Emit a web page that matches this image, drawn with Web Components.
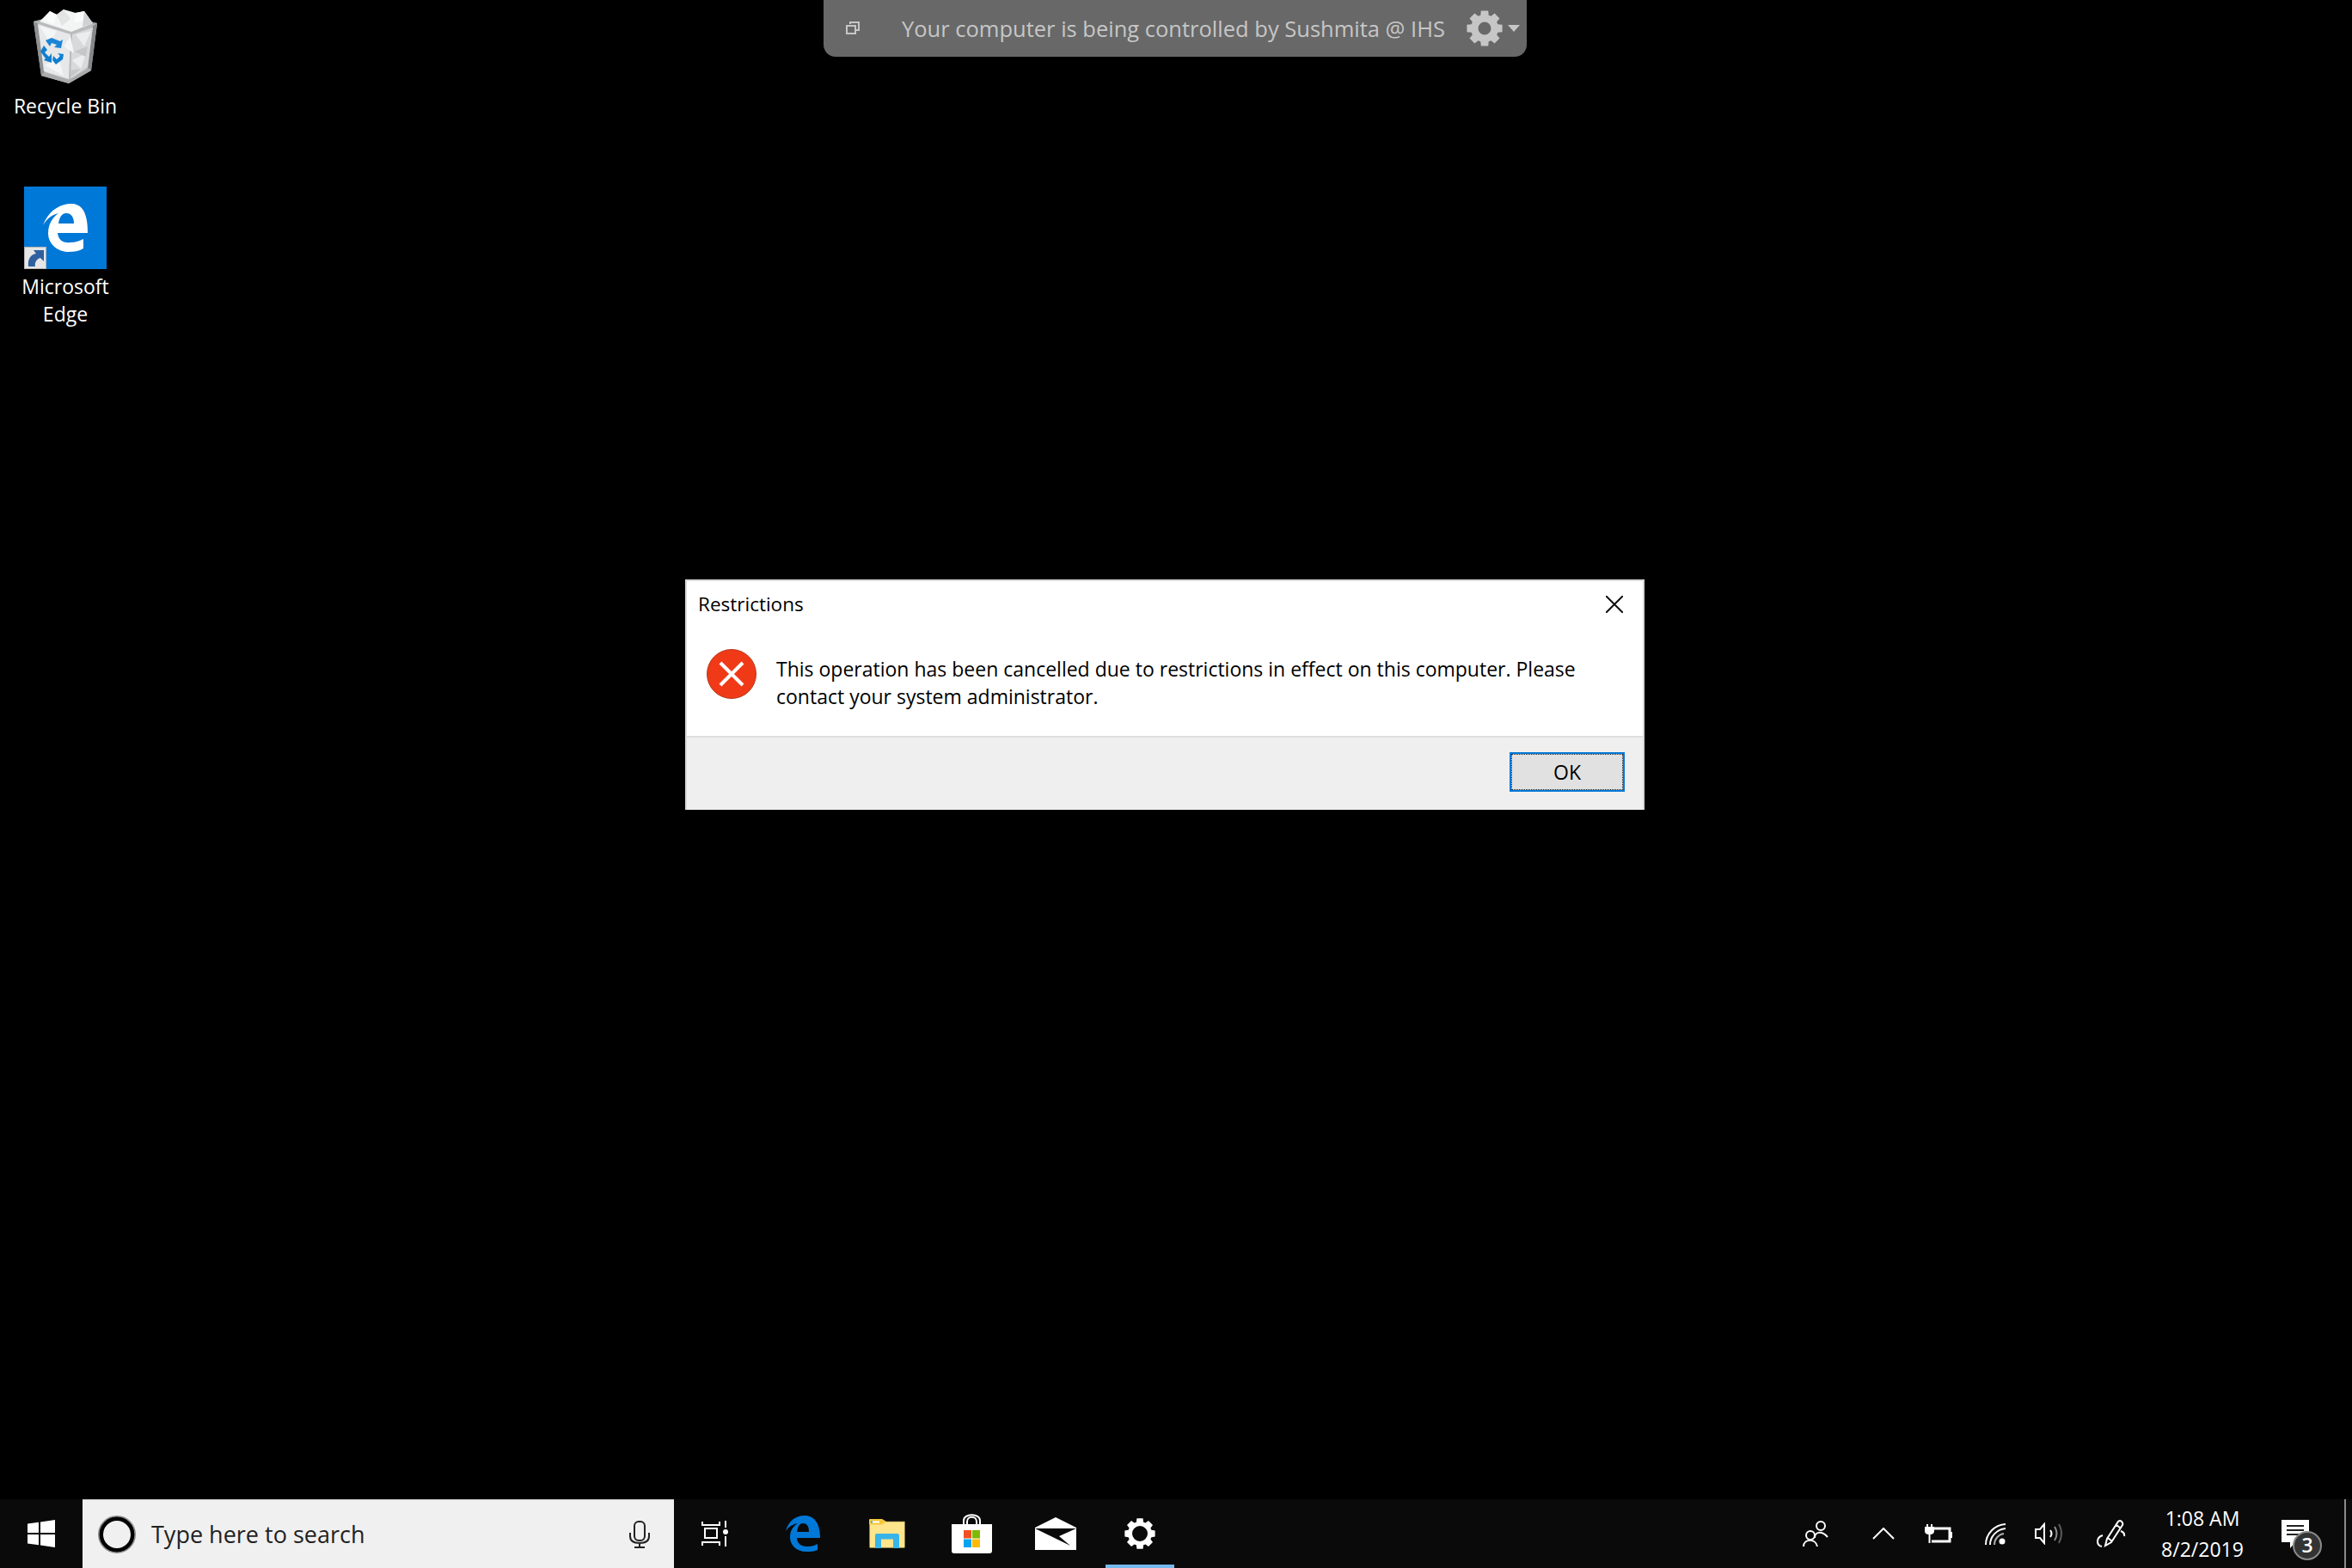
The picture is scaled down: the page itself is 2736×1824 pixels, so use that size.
<!DOCTYPE html>
<html>
<head>
<meta charset="utf-8">
<title>Restrictions</title>
<style>
  html, body { margin: 0; padding: 0; background: #000; }
  html { height: 1824px; overflow: hidden; }
  body { width: 2736px; height: 1824px; overflow: hidden; font-family: "Open Sans", "Noto Sans", sans-serif; }
</style>
</head>
<body>

<win-screen>
  <desktop-icon slot="icons" style="--top:6px" label="Recycle Bin">
    <svg width="76" height="88" viewBox="0 0 76 88">
      <path d="M1 15L32 7L75 17L68 72L42 87L10 78Z" fill="#b9bbbc"/>
      <path d="M1 15L32 7L75 17L71 18L32 10L6 15Z" fill="#989a9b"/>
      <path d="M1 15L6 17L14 75L10 78Z" fill="#8f9192"/>
      <path d="M75 17L70 20L64 70L68 72Z" fill="#858788"/>
      <path d="M6 18L44 30L42 82L13 73Z" fill="#e6e8e9"/>
      <path d="M46 30L70 22L64 68L44 82Z" fill="#d7d9da"/>
      <path d="M8 15L20 3L28 7L36 1L50 5L60 3L70 17L45 27Z" fill="#f3f4f4"/>
      <path d="M20 3L28 7L24 18L12 12Z M50 5L60 3L62 14L48 16Z" fill="#fbfbfb"/>
      <path d="M36 1L44 12L34 20L28 7Z" fill="#e2e4e5"/>
      <path d="M60 3L70 17L58 21Z" fill="#cfd1d2"/>
      <path d="M8 20L28 26L20 40Z M44 32L48 52L36 44Z M14 66L30 56L36 78Z" fill="#f4f5f5"/>
      <path d="M50 30L68 26L60 44Z M46 60L62 52L56 70Z" fill="#eceeee"/>
      <path d="M48 50L64 44L62 56Z M44 72L56 70L44 80Z" fill="#c5c7c8"/>
      <path d="M10 78L42 87L68 72L66 69L42 83L13 74Z" fill="#a9abac"/>
      <path d="M15 37L22 34L32 38L35 36L33 46L25 45L28 42L22 40L20 44Z" fill="#1a84d6"/>
      <path d="M13 43L17 48L14 51L19 56L22 52L22 63L13 60L15 58L9 50Z" fill="#0f7ed0"/>
      <path d="M24 55L28 59L32 55L29 52L36 53L35 59L27 65L23 60Z" fill="#0f7ed0"/>
    </svg>
  </desktop-icon>
  <desktop-icon slot="icons" style="--top:78px;--gap:4px" label="Microsoft Edge">
    <svg width="96" height="96" viewBox="0 0 96 96">
      <rect width="96" height="96" fill="#0078d7"/>
      <path d="M22 45C28 29 41 20 55 20C70 20 74 35 74 54L39 54C40 63 46 66 54 65C60 65 65 63 69 61L69 72C64 75 58 76 52 76C38 76 28 66 28 54C28 45 32 37 40 31C32 33 26 38 22 45ZM40 43L58 43C58 36 55 31 49 31C44 31 41 36 40 43Z" fill="#fff"/>
      <rect x="0.500" y="70.500" width="25" height="25" fill="#e6e6e6" stroke="#b5b5b5"/>
      <path d="M5 93C4 84 8 79 14 78L11 74L23 74L23 87L19 83C15 84 12 88 13 93Z" fill="#2f5f9e"/>
    </svg>
  </desktop-icon>

  <remote-bar slot="overlay"></remote-bar>
  <error-dialog slot="overlay" heading="Restrictions" message="This operation has been cancelled due to restrictions in effect on this computer. Please contact your system administrator."></error-dialog>

  <task-bar slot="bar">
    <start-button slot="start"></start-button>
    <search-box slot="search" placeholder="Type here to search"></search-box>

    <task-button slot="apps" style="margin-right:4px">
      <svg width="32" height="30" viewBox="0 0 32 30" fill="none" stroke="#fff" stroke-width="2">
        <path d="M1 1V5H21V1M4 9H18V20H4ZM1 29V25H21V29M28 0V8M28 18V30"/>
        <circle cx="28" cy="13" r="3" fill="#fff" stroke="none"/>
      </svg>
    </task-button>
    <task-button slot="apps">
      <svg width="40" height="42" viewBox="0 0 40 42">
        <path d="M0 18C3 7 11 0 22 0C34 0 40 10 40 26L13 26C13 33 19 36 25 36C30 36 34 35 37 33L37 40C33 42 28 42 24 42C12 42 5 34 5 25C5 18 8 13 14 9C8 10 3 13 0 18ZM13 19L27 19C27 13 25 9 20 9C16 9 14 13 13 19Z" fill="#0078d7"/>
      </svg>
    </task-button>
    <task-button slot="apps">
      <svg width="42" height="34" viewBox="0 0 42 34">
        <path d="M1 1H16L19 3H41.500V32.500Q41.500 33.500 40.500 33.500H1.500Q0.500 33.500 0.500 32.500V1.500Z" fill="#ffe58c" stroke="#8f7f45" stroke-width="0.600"/>
        <path d="M0 1Q0 0 1 0H15L20 3L15 6.500H0Z" fill="#f5c83c"/>
        <rect x="2" y="2.500" width="10" height="2" fill="#fff"/>
        <rect x="2" y="2.500" width="2" height="2" fill="#29a3e6"/>
        <path d="M7 34V19Q7 17 9 17H33Q35 17 35 19V34H28V23.500H14V34Z" fill="#38b4e8"/>
      </svg>
    </task-button>
    <task-button slot="apps">
      <svg width="47" height="46" viewBox="0 0 47 46">
        <path d="M14 13V8C14 -1 33 -1 33 8V13M18 13V9C18 2 29 2 29 9V13" fill="none" stroke="#fff" stroke-width="2"/>
        <path d="M0 12H47V43Q47 46 44 46H3Q0 46 0 43Z" fill="#fff"/>
        <rect x="14" y="19" width="9" height="9.500" fill="#f25022"/>
        <rect x="24" y="19" width="9" height="9.500" fill="#7fba00"/>
        <rect x="14" y="29.500" width="9" height="9.500" fill="#00a4ef"/>
        <rect x="24" y="29.500" width="9" height="9.500" fill="#ffb900"/>
      </svg>
    </task-button>
    <task-button slot="apps">
      <svg width="48" height="38" viewBox="0 0 48 38">
        <path d="M24 0L48 12V38H0V12Z" fill="#fff"/>
        <path d="M0 13L48 13L28 22L41 33Z" fill="#0a0a0a"/>
      </svg>
    </task-button>
    <task-button slot="apps" active>
      <gear-icon size="36" outer="18" inner="14" hole="9" color="#fff"></gear-icon>
    </task-button>

    <tray-icon slot="tray" style="--w:105px">
      <svg width="30" height="30" viewBox="0 0 30 30" fill="none" stroke="#fff" stroke-width="2">
        <circle cx="21" cy="6" r="5"/><path d="M14 20C14 13 22 11 29 19"/>
        <circle cx="9" cy="17" r="5"/><path d="M1 30C1 21 15 20 17 30"/>
      </svg>
    </tray-icon>
    <tray-icon slot="tray" style="--w:54px">
      <svg width="26" height="14" viewBox="0 0 26 14" fill="none" stroke="#fff" stroke-width="2"><path d="M1 13L13 1L25 13"/></svg>
    </tray-icon>
    <tray-icon slot="tray" style="--w:73px">
      <svg width="32" height="22" viewBox="0 0 32 22" fill="none" stroke="#fff" stroke-width="2">
        <path d="M3 0V4M8 0V4M5.500 11V22"/>
        <path d="M1 4H10V8Q10 11 6 11H5Q1 11 1 8Z" fill="#fff"/>
        <path d="M11 5H29V20H8" stroke-width="3"/><path d="M31 9V16"/>
      </svg>
    </tray-icon>
    <tray-icon slot="tray" style="--w:61px">
      <svg width="25" height="25" viewBox="0 0 25 25" fill="none" stroke="#fff" stroke-width="2">
        <path d="M1 25C1 12 11 2 24 1"/><path d="M6 25C6 15 14 7 24 6"/><path d="M11 25C11 18 16 13 22 12" stroke="#aaa"/>
        <circle cx="20" cy="21" r="3.500" fill="#fff" stroke="none"/>
      </svg>
    </tray-icon>
    <tray-icon slot="tray" style="--w:62px">
      <svg width="32" height="26" viewBox="0 0 32 26" fill="none" stroke="#fff" stroke-width="2">
        <path d="M1 8H6L11 2V24L6 18H1Z"/><path d="M18 9Q21 13 18 17"/>
        <path d="M23 5Q28 13 23 21" stroke="#8c8c8c"/><path d="M28 2Q34 13 28 24" stroke="#5a5a5a"/>
      </svg>
    </tray-icon>
    <tray-icon slot="tray" style="--w:83px">
      <svg width="34" height="32" viewBox="0 0 34 32" fill="none" stroke="#fff" stroke-width="2">
        <path d="M10 30L12 22L25 2Q27 0 29 2Q31 4 30 6L17 26ZM13 21L18 25M23 6L27 9"/>
        <path d="M28 13Q33 15 32 19"/><path d="M7 18Q1 20 1 25Q1 30 6 31"/>
      </svg>
    </tray-icon>
    <tray-clock slot="tray" time="1:08 AM" date="8/2/2019"></tray-clock>
    <notify-button slot="tray" count="3"></notify-button>
  </task-bar>
</win-screen>

<script>
function gearPath(size, outer, inner, hole) {
  const c = size / 2;
  const pt = (r, a) => (c + r * Math.cos(a)).toFixed(2) + " " + (c + r * Math.sin(a)).toFixed(2);
  let d = "";
  for (let i = 0; i < 8; i++) {
    const a = -Math.PI / 2 + i * Math.PI / 4;
    d += (i ? "L" : "M") + pt(inner, a - 0.3) + "L" + pt(outer, a - 0.2) + "L" + pt(outer, a + 0.2) + "L" + pt(inner, a + 0.3);
  }
  d += "Z";
  d += "M" + (c - hole) + " " + c + "A" + hole + " " + hole + " 0 1 0 " + (c + hole) + " " + c + "A" + hole + " " + hole + " 0 1 0 " + (c - hole) + " " + c + "Z";
  return d;
}

class GearIcon extends HTMLElement {
  constructor() {
    super();
    this.attachShadow({ mode: "open" });
  }
  connectedCallback() {
    const size = +this.getAttribute("size");
    const d = gearPath(size, +this.getAttribute("outer"), +this.getAttribute("inner"), +this.getAttribute("hole"));
    this.shadowRoot.innerHTML = `
      <style>:host { display: inline-flex; }</style>
      <svg width="${size}" height="${size}" viewBox="0 0 ${size} ${size}">
        <path fill="${this.getAttribute("color")}" fill-rule="evenodd" d="${d}"/>
      </svg>
    `;
  }
}

class WinScreen extends HTMLElement {
  constructor() {
    super();
    this.attachShadow({ mode: "open" });
    this.shadowRoot.innerHTML = `
      <style>
        :host { display: grid; grid-template-rows: 1fr 80px; width: 2736px; height: 1824px; background: #000; position: relative; }
        .desk { display: flex; flex-direction: column; align-items: flex-start; }
      </style>
      <div class="desk"><slot name="icons"></slot></div>
      <slot name="bar"></slot>
      <slot name="overlay"></slot>
    `;
  }
}

class DesktopIcon extends HTMLElement {
  constructor() {
    super();
    this.attachShadow({ mode: "open" });
    this.shadowRoot.innerHTML = `
      <style>
        :host { display: flex; flex-direction: column; align-items: center; width: 152px; margin-top: var(--top); }
        .pic { height: 96px; display: flex; align-items: center; justify-content: center; }
        .name { color: #fff; font: 23px/32px "Open Sans", sans-serif; text-align: center; width: 130px; margin-top: var(--gap, 5px); }
      </style>
      <div class="pic"><slot></slot></div>
      <div class="name"></div>
    `;
  }
  connectedCallback() {
    this.shadowRoot.querySelector(".name").textContent = this.getAttribute("label");
  }
}

class RemoteBar extends HTMLElement {
  constructor() {
    super();
    this.attachShadow({ mode: "open" });
    this.shadowRoot.innerHTML = `
      <style>
        :host { display: flex; align-items: center; position: absolute; top: 0; left: 958px; width: 818px; height: 66px; box-sizing: border-box; padding: 0 8px 0 26px; background: #686868; border-radius: 0 0 14px 14px; }
        .txt { color: #c6c6c6; font: 25.500px "Open Sans", sans-serif; margin-left: 49px; white-space: nowrap; flex: 1; }
        .drop { width: 0; height: 0; border: 7px solid transparent; border-top: 8px solid #c6c6c6; border-bottom: 0; margin-left: 6px; }
      </style>
      <svg width="16" height="16" viewBox="0 0 16 16" fill="none" stroke="#c6c6c6" stroke-width="2"><path d="M5 3V1H15V10H12"/><rect x="1" y="5" width="10" height="9"/></svg>
      <div class="txt">Your computer is being controlled by Sushmita @ IHS</div>
      <gear-icon size="42" outer="21" inner="16" hole="7.500" color="#c6c6c6"></gear-icon>
      <div class="drop"></div>
    `;
  }
}

class ErrorDialog extends HTMLElement {
  constructor() {
    super();
    this.attachShadow({ mode: "open" });
    this.shadowRoot.innerHTML = `
      <style>
        :host { display: flex; flex-direction: column; position: absolute; left: 797px; top: 674px; width: 1116px; height: 268px; box-sizing: border-box; background: #fff; border: 2px solid #d9d9d9; border-width: 2px 2px 0 2px; color: #000; font: 23px/32px "Open Sans", sans-serif; }
        .head { display: flex; justify-content: space-between; align-items: flex-start; padding: 11px 23px 0 13px; height: 56px; box-sizing: border-box; }
        .title { font-size: 22.500px; }
        .close { margin-top: 6px; }
        .body { display: flex; flex: 1; gap: 23px; padding: 23px 40px 0 23px; }
        .icon { flex: none; width: 58px; height: 58px; }
        .msg { padding-top: 7px; }
        .foot { height: 86px; box-sizing: border-box; background: #efefef; border-top: 2px solid #dfdfdf; display: flex; justify-content: flex-end; align-items: flex-start; padding: 17px 21px 0 0; }
        .ok { width: 134px; height: 46px; box-sizing: border-box; background: #e1e1e1; border: 2px solid #0078d7; outline: 1px dotted #222; outline-offset: -3px; font: inherit; line-height: 1; color: #000; padding: 0; }
      </style>
      <div class="head"><span class="title"></span>
        <svg class="close" width="20" height="20" viewBox="0 0 20 20" stroke="#111" stroke-width="2"><path d="M0 0L20 20M20 0L0 20"/></svg>
      </div>
      <div class="body">
        <svg class="icon" viewBox="0 0 58 58">
          <circle cx="29" cy="29" r="28.500" fill="#f03a17" stroke="#b5391f" stroke-width="1"/>
          <path d="M16 16L42 42M42 16L16 42" stroke="#fff" stroke-width="4"/>
        </svg>
        <div class="msg"></div>
      </div>
      <div class="foot"><button class="ok">OK</button></div>
    `;
  }
  connectedCallback() {
    this.shadowRoot.querySelector(".title").textContent = this.getAttribute("heading");
    this.shadowRoot.querySelector(".msg").textContent = this.getAttribute("message");
  }
}

class TaskBar extends HTMLElement {
  constructor() {
    super();
    this.attachShadow({ mode: "open" });
    this.shadowRoot.innerHTML = `
      <style>
        :host { display: flex; height: 80px; background: #0a0a0a; }
        .apps { display: flex; gap: 18px; padding-left: 8px; }
        .tray { display: flex; margin-left: auto; }
      </style>
      <slot name="start"></slot>
      <slot name="search"></slot>
      <div class="apps"><slot name="apps"></slot></div>
      <div class="tray"><slot name="tray"></slot></div>
    `;
  }
}

class StartButton extends HTMLElement {
  constructor() {
    super();
    this.attachShadow({ mode: "open" });
    this.shadowRoot.innerHTML = `
      <style>:host { display: flex; align-items: center; justify-content: center; width: 96px; height: 80px; }</style>
      <svg width="32" height="32" viewBox="0 0 32 32" fill="#fff"><path d="M0 4.500L13 2.700V15H0ZM15 2.400L32 0V15H15ZM0 17H13V29.300L0 27.500ZM15 17H32V32L15 29.600Z"/></svg>
    `;
  }
}

class SearchBox extends HTMLElement {
  constructor() {
    super();
    this.attachShadow({ mode: "open" });
    this.shadowRoot.innerHTML = `
      <style>
        :host { display: flex; align-items: center; width: 688px; height: 80px; box-sizing: border-box; background: #f0f0f0; border-top: 1px solid #c8c8c8; padding: 0 28px 0 18px; }
        .ph { flex: 1; margin-left: 18px; color: #222; font: 27px "Open Sans", sans-serif; white-space: nowrap; }
      </style>
      <svg width="44" height="44" viewBox="0 0 44 44" fill="none"><circle cx="22" cy="22" r="18.500" stroke="#000" stroke-width="5"/><circle cx="22" cy="22" r="21.200" stroke="#8a8a8a" stroke-width="1.600"/></svg>
      <div class="ph"></div>
      <svg width="24" height="32" viewBox="0 0 24 32" fill="none" stroke="#222" stroke-width="2"><rect x="6" y="1" width="12" height="22" rx="5"/><path d="M1 14V18Q1 26 12 26Q23 26 23 18V14M12 26V31M6 31H18"/></svg>
    `;
    this.shadowRoot.querySelector(".ph").textContent = this.getAttribute("placeholder");
  }
}

class TaskButton extends HTMLElement {
  constructor() {
    super();
    this.attachShadow({ mode: "open" });
    this.shadowRoot.innerHTML = `
      <style>
        :host { display: flex; align-items: center; justify-content: center; width: 80px; height: 80px; position: relative; }
        :host([active])::after { content: ""; position: absolute; left: 0; right: 0; bottom: 0; height: 4px; background: #76b9ed; }
      </style>
      <slot></slot>
    `;
  }
}

class TrayIcon extends HTMLElement {
  constructor() {
    super();
    this.attachShadow({ mode: "open" });
    this.shadowRoot.innerHTML = `
      <style>:host { display: flex; align-items: center; justify-content: center; width: var(--w); height: 80px; }</style>
      <slot></slot>
    `;
  }
}

class TrayClock extends HTMLElement {
  constructor() {
    super();
    this.attachShadow({ mode: "open" });
    this.shadowRoot.innerHTML = `
      <style>
        :host { display: flex; flex-direction: column; align-items: center; justify-content: center; width: 130px; height: 80px; color: #fff; font: 23px/36px "Open Sans", sans-serif; }
      </style>
      <div class="t"></div><div class="d"></div>
    `;
  }
  connectedCallback() {
    this.shadowRoot.querySelector(".t").textContent = this.getAttribute("time");
    this.shadowRoot.querySelector(".d").textContent = this.getAttribute("date");
  }
}

class NotifyButton extends HTMLElement {
  constructor() {
    super();
    this.attachShadow({ mode: "open" });
    this.shadowRoot.innerHTML = `
      <style>
        :host { display: block; width: 102px; height: 80px; position: relative; border-right: 2px solid #8a8a8a; margin-right: 7px; box-sizing: border-box; }
        svg { position: absolute; left: 27px; top: 24px; }
        .badge { position: absolute; left: 40px; top: 37px; width: 34px; height: 34px; box-sizing: border-box; border-radius: 50%; background: #333; border: 2px solid #8a8a8a; color: #fff; font: 600 23px/29px "Open Sans", sans-serif; text-align: center; }
      </style>
      <svg width="32" height="33" viewBox="0 0 32 33"><path fill="#fff" d="M0 0H32V26H16L10 33V26H0Z"/><path stroke="#222" stroke-width="2" d="M6 7H26M6 12H26M6 17H26"/></svg>
      <div class="badge"></div>
    `;
  }
  connectedCallback() {
    this.shadowRoot.querySelector(".badge").textContent = this.getAttribute("count");
  }
}

customElements.define("gear-icon", GearIcon);
customElements.define("win-screen", WinScreen);
customElements.define("desktop-icon", DesktopIcon);
customElements.define("remote-bar", RemoteBar);
customElements.define("error-dialog", ErrorDialog);
customElements.define("task-bar", TaskBar);
customElements.define("start-button", StartButton);
customElements.define("search-box", SearchBox);
customElements.define("task-button", TaskButton);
customElements.define("tray-icon", TrayIcon);
customElements.define("tray-clock", TrayClock);
customElements.define("notify-button", NotifyButton);
</script>
</body>
</html>
